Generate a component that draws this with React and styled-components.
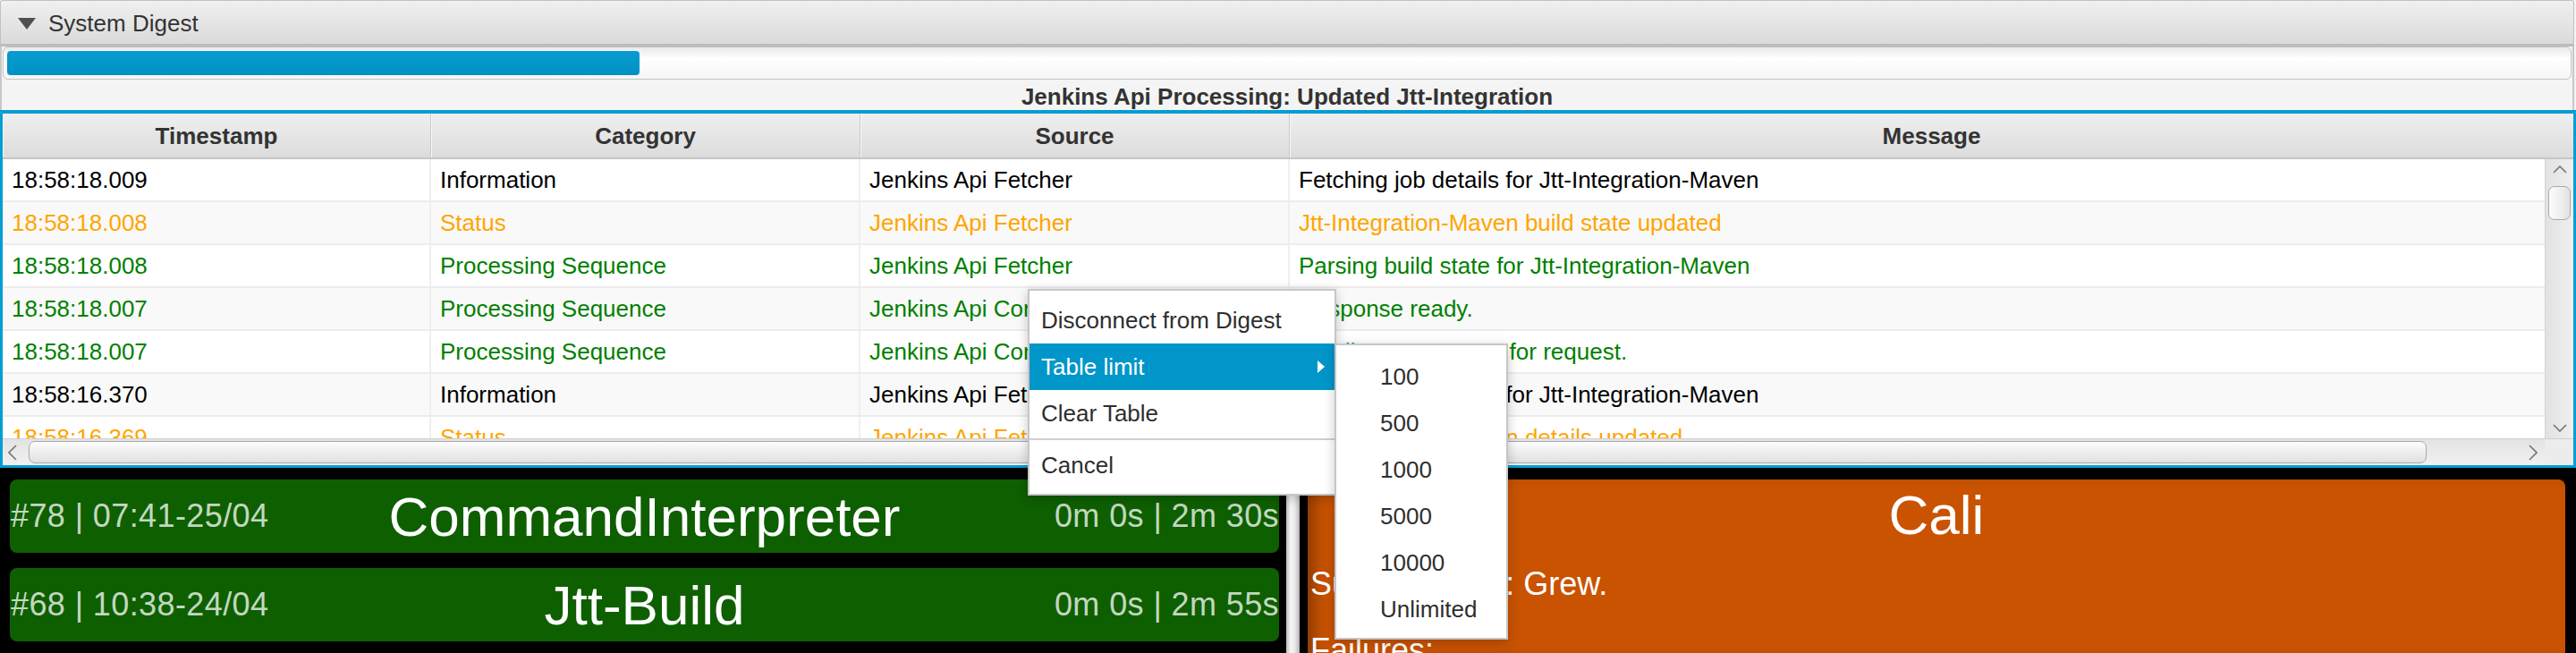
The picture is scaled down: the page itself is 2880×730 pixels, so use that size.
import React from 'react';
import styled, { createGlobalStyle } from 'styled-components';

const GlobalStyle = createGlobalStyle`
  html, body {
    margin: 0;
    padding: 0;
    background: #000;
  }
  body {
    font-family: "Liberation Sans", Arial, sans-serif;
  }
`;

const Window = styled.div`
  position: relative;
  width: 2880px;
  height: 730px;
  overflow: hidden;
  display: flex;
  flex-direction: column;
  background: #f4f4f4;
  font-family: "Liberation Sans", Arial, sans-serif;`;

const TitleBar = styled.div`
  flex: none;
  box-sizing: border-box;
  height: 52px;
  margin-right: 2px;
  display: flex;
  align-items: center;
  gap: 14px;
  padding: 2px 0 0 19px;
  border: 1px solid #c2c2c2;
  border-bottom: 3px solid #bcbcbc;
  border-radius: 3px 3px 0 0;
  background: linear-gradient(to bottom, #f0f0f0, #dadada);
  color: #333;
  font-size: 26px;`;

const Caret = styled.span`
  width: 0;
  height: 0;
  border-left: 10px solid transparent;
  border-right: 10px solid transparent;
  border-top: 13px solid #4f4f4f;`;

const TitledContent = styled.div`
  flex: none;
  margin-right: 2px;
  padding: 0 1px;
  border-left: 2px solid #c8c8c8;
  border-right: 2px solid #c8c8c8;`;

const ProgressTrack = styled.div`
  box-sizing: border-box;
  height: 37px;
  padding: 4px;
  border: 1px solid #c4c4c4;
  border-radius: 6px;
  background: linear-gradient(to bottom, #e9e9e9, #ffffff 35%, #f6f6f6);`;

const ProgressFill = styled.div`
  height: 100%;
  border-radius: 4px;
  background: linear-gradient(to bottom, #0a9cd0, #0090c3);`;

const StatusLabel = styled.div`
  box-sizing: border-box;
  height: 34px;
  padding-top: 4px;
  display: flex;
  align-items: center;
  justify-content: center;
  font-size: 26px;
  font-weight: bold;
  color: #333;`;

const Table = styled.div`
  flex: none;
  box-sizing: border-box;
  height: 400px;
  display: flex;
  flex-direction: column;
  border: 3px solid #039ed3;
  border-top-width: 4px;
  background: #fff;`;

const HeaderRow = styled.div`
  flex: none;
  box-sizing: border-box;
  height: 51px;
  display: grid;
  grid-template-columns: 479px 480px 480px 1fr;
  border-bottom: 2px solid #c6c6c6;
  background: linear-gradient(to bottom, #efefef, #dcdcdc);`;

const HeaderCell = styled.div`
  display: flex;
  align-items: center;
  justify-content: center;
  padding-top: 2px;
  border-right: 1px solid #c8c8c8;
  box-shadow: inset 1px 0 0 #f9f9f9;
  font-size: 26px;
  font-weight: bold;
  color: #333;

  &:last-child {
    border-right: none;
  }`;

const TableBody = styled.div`
  flex: none;
  height: 312px;
  display: flex;
  overflow: hidden;`;

const Rows = styled.div`
  flex: 1;
  overflow: hidden;`;

const toneColors = {
  info: '#000000',
  status: '#ffa500',
  sequence: '#008000',
};

const Row = styled.div`
  box-sizing: border-box;
  height: 48px;
  display: grid;
  grid-template-columns: 479px 480px 480px 1fr;
  border-bottom: 2px solid #ececec;
  background: ${(p) => (p.$alt ? '#f9f9f9' : '#ffffff')};
  color: ${(p) => toneColors[p.$tone]};`;

const Cell = styled.div`
  display: flex;
  align-items: center;
  padding-left: 10px;
  border-right: 2px solid #efefef;
  font-size: 26px;
  white-space: nowrap;
  overflow: hidden;

  &:last-child {
    border-right: none;
  }`;

const VScroll = styled.div`
  box-sizing: border-box;
  width: 32px;
  padding: 7px 0;
  display: flex;
  flex-direction: column;
  align-items: center;
  border-left: 1px solid #d4d4d4;
  background: linear-gradient(to right, #e2e2e2, #efefef);`;

const VThumb = styled.div`
  box-sizing: border-box;
  width: 25px;
  height: 38px;
  margin-top: 14px;
  border: 1px solid #a9a9a9;
  border-radius: 7px;
  background: linear-gradient(to right, #fdfdfd, #e2e2e2);`;

const Spacer = styled.div`
  flex: 1;`;

const HScroll = styled.div`
  flex: none;
  box-sizing: border-box;
  height: 30px;
  display: flex;
  border-top: 1px solid #d0d0d0;`;

const HTrack = styled.div`
  flex: 1;
  display: flex;
  align-items: center;
  padding: 0 8px 0 6px;
  background: linear-gradient(to bottom, #e3e3e3, #f1f1f1);`;

const HThumb = styled.div`
  flex: none;
  box-sizing: border-box;
  width: 2681px;
  height: 25px;
  margin-left: 13px;
  border: 1px solid #a9a9a9;
  border-radius: 7px;
  background: linear-gradient(to bottom, #fdfdfd, #e0e0e0);`;

const Corner = styled.div`
  width: 32px;
  background: #ececec;`;

const ArrowSvg = styled.svg`
  flex: none;
  fill: none;
  stroke: #747474;
  stroke-width: 1.6;`;

const Dashboard = styled.div`
  flex: 1;
  min-height: 0;
  overflow: hidden;
  display: flex;
  background: #000;`;

const BuildList = styled.div`
  box-sizing: border-box;
  width: 1438px;
  padding: 13px 8px 0 11px;
  display: flex;
  flex-direction: column;
  gap: 17px;`;

const BuildRow = styled.div`
  flex: none;
  height: 82px;
  display: grid;
  grid-template-columns: 1fr auto 1fr;
  align-items: center;
  border-radius: 8px;
  background: #0e5f00;
  color: #fff;`;

const BuildMeta = styled.span`
  justify-self: ${(p) => (p.$end ? 'end' : 'start')};
  padding-left: ${(p) => (p.$end ? '0' : '1px')};
  font-size: 36px;
  letter-spacing: 0.4px;
  color: rgba(255, 255, 255, 0.77);
  white-space: nowrap;`;

const BuildName = styled.span`
  font-size: 62px;
  white-space: nowrap;`;

const Splitter = styled.div`
  width: 15px;
  background: linear-gradient(to right, #bdbdbd, #f6f6f6 35%, #e8e8e8 65%, #b6b6b6);`;

const DetailPane = styled.div`
  flex: 1;
  display: flex;
  padding: 13px 12px 0 9px;`;

const DetailCard = styled.div`
  flex: 1;
  display: flex;
  flex-direction: column;
  padding-top: 4px;
  border-radius: 8px 8px 0 0;
  background: #c95300;
  box-shadow: inset 16px 0 18px -10px rgba(0, 0, 0, 0.35);
  color: #fff;`;

const DetailTitle = styled.div`
  flex: none;
  font-size: 62px;
  line-height: 71px;
  text-align: center;
  margin-bottom: 21px;`;

const DetailLines = styled.div`
  display: flex;
  flex-direction: column;
  gap: 33px;
  padding-left: 3px;`;

const DetailLine = styled.div`
  flex: none;
  font-size: 36px;
  line-height: 41px;
  white-space: nowrap;`;

const Menu = styled.div`
  position: absolute;
  left: ${(p) => p.$left}px;
  top: ${(p) => p.$top}px;
  width: ${(p) => p.$width}px;
  box-sizing: border-box;
  padding: ${(p) => p.$padTop}px 0 6px;
  border: 2px solid #c6c6c6;
  background: #fff;
  box-shadow: 0 3px 12px rgba(0, 0, 0, 0.22);
  font-size: 26px;`;

const MenuItem = styled.div`
  height: 52px;
  display: flex;
  align-items: center;
  padding: 0 11px 0 ${(p) => p.$inset}px;
  background: ${(p) => (p.$active ? '#0096c9' : 'transparent')};
  color: ${(p) => (p.$active ? '#ffffff' : '#2e2e2e')};
  white-space: nowrap;`;

const SubArrow = styled.span`
  margin-left: auto;
  width: 0;
  height: 0;
  border-top: 7px solid transparent;
  border-bottom: 7px solid transparent;
  border-left: 8px solid #fff;`;

const MenuSeparator = styled.div`
  height: 2px;
  margin: 2px 0;
  background: #cfcfcf;`;

const arrowPoints = {
  up: { w: 16, h: 9, pts: '1,8 8,1 15,8' },
  down: { w: 16, h: 9, pts: '1,1 8,8 15,1' },
  left: { w: 10, h: 18, pts: '9,1 1,9 9,17' },
  right: { w: 10, h: 18, pts: '1,1 9,9 1,17' },
};

const Arrow = ({ dir }) => {
	const a = arrowPoints[dir];
	return (
		<ArrowSvg width={a.w} height={a.h} viewBox={`0 0 ${a.w} ${a.h}`}>
			<polyline points={a.pts} />
		</ArrowSvg>
	);
};

const columns = ['Timestamp', 'Category', 'Source', 'Message'];

const events = [
	{ time: '18:58:18.009', category: 'Information', source: 'Jenkins Api Fetcher', message: 'Fetching job details for Jtt-Integration-Maven', tone: 'info' },
	{ time: '18:58:18.008', category: 'Status', source: 'Jenkins Api Fetcher', message: 'Jtt-Integration-Maven build state updated', tone: 'status' },
	{ time: '18:58:18.008', category: 'Processing Sequence', source: 'Jenkins Api Fetcher', message: 'Parsing build state for Jtt-Integration-Maven', tone: 'sequence' },
	{ time: '18:58:18.007', category: 'Processing Sequence', source: 'Jenkins Api Connector', message: 'Response ready.', tone: 'sequence' },
	{ time: '18:58:18.007', category: 'Processing Sequence', source: 'Jenkins Api Connector', message: 'Building a response for request.', tone: 'sequence' },
	{ time: '18:58:16.370', category: 'Information', source: 'Jenkins Api Fetcher', message: 'Fetching job details for Jtt-Integration-Maven', tone: 'info' },
	{ time: '18:58:16.369', category: 'Status', source: 'Jenkins Api Fetcher', message: 'Jtt-Integration-Maven details updated', tone: 'status' },
];

const builds = [
	{ id: '#78 | 07:41-25/04', name: 'CommandInterpreter', times: '0m 0s | 2m 30s' },
	{ id: '#68 | 10:38-24/04', name: 'Jtt-Build', times: '0m 0s | 2m 55s' },
];

const limits = ['100', '500', '1000', '5000', '10000', 'Unlimited'];

const progress = 0.247;

const App = () => {
	return (
		<Window>
			<GlobalStyle />
			<TitleBar>
				<Caret />
				System Digest
			</TitleBar>
			<TitledContent>
				<ProgressTrack>
					<ProgressFill style={{ width: `${progress * 100}%` }} />
				</ProgressTrack>
				<StatusLabel>Jenkins Api Processing: Updated Jtt-Integration</StatusLabel>
			</TitledContent>

			<Table>
				<HeaderRow>
					{columns.map((c) => <HeaderCell key={c}>{c}</HeaderCell>)}
				</HeaderRow>
				<TableBody>
					<Rows>
						{events.map((e, i) => (
							<Row key={i} $alt={i % 2 === 1} $tone={e.tone}>
								<Cell>{e.time}</Cell>
								<Cell>{e.category}</Cell>
								<Cell>{e.source}</Cell>
								<Cell>{e.message}</Cell>
							</Row>
						))}
					</Rows>
					<VScroll>
						<Arrow dir="up" />
						<VThumb />
						<Spacer />
						<Arrow dir="down" />
					</VScroll>
				</TableBody>
				<HScroll>
					<HTrack>
						<Arrow dir="left" />
						<HThumb />
						<Spacer />
						<Arrow dir="right" />
					</HTrack>
					<Corner />
				</HScroll>
			</Table>

			<Dashboard>
				<BuildList>
					{builds.map((b) => (
						<BuildRow key={b.name}>
							<BuildMeta>{b.id}</BuildMeta>
							<BuildName>{b.name}</BuildName>
							<BuildMeta $end>{b.times}</BuildMeta>
						</BuildRow>
					))}
				</BuildList>
				<Splitter />
				<DetailPane>
					<DetailCard>
						<DetailTitle>Cali</DetailTitle>
						<DetailLines>
							<DetailLine>Suspected by: Grew.</DetailLine>
							<DetailLine>Failures:</DetailLine>
						</DetailLines>
					</DetailCard>
				</DetailPane>
			</Dashboard>

			<Menu $left={1149} $top={323} $width={345} $padTop={7}>
				<MenuItem $inset={13}>Disconnect from Digest</MenuItem>
				<MenuItem $inset={13} $active>
					Table limit
					<SubArrow />
				</MenuItem>
				<MenuItem $inset={13}>Clear Table</MenuItem>
				<MenuSeparator />
				<MenuItem $inset={13}>Cancel</MenuItem>
			</Menu>
			<Menu $left={1492} $top={384} $width={194} $padTop={9}>
				{limits.map((l) => <MenuItem key={l} $inset={49}>{l}</MenuItem>)}
			</Menu>
		</Window>
	);
};

export default App;
